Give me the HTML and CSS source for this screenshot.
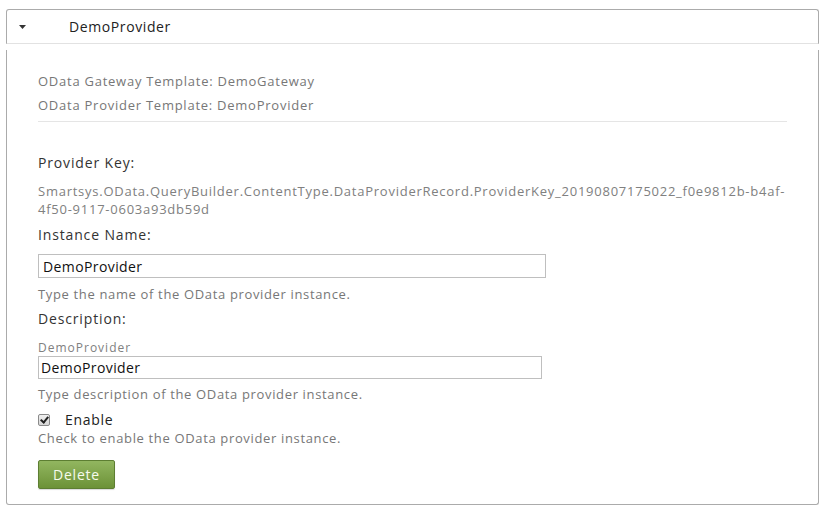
FILE: index.html
```html
<!DOCTYPE html>
<html>
<head>
<meta charset="utf-8">
<link rel="stylesheet" href="styles.css">
</head>
<body>
<div class="wrap">
  <div class="head">
    <svg class="caret" width="7" height="4" viewBox="0 0 7 4"><polygon points="0,0 7,0 3.5,4" fill="#333"/></svg>
    <span class="head-title">DemoProvider</span>
  </div>
  <div class="panel">
    <div class="meta">
      <div class="meta-line">OData Gateway Template: DemoGateway</div>
      <div class="meta-line">OData Provider Template: DemoProvider</div>
    </div>
    <div class="field key-field">
      <div class="label">Provider Key:</div>
      <div class="key">Smartsys.OData.QueryBuilder.ContentType.DataProviderRecord.ProviderKey_20190807175022_f0e9812b-b4af-4f50-9117-0603a93db59d</div>
    </div>
    <div class="field name-field">
      <div class="label">Instance Name:</div>
      <input class="text name-input" type="text" value="DemoProvider">
      <div class="hint">Type the name of the OData provider instance.</div>
    </div>
    <div class="field desc-field">
      <div class="label">Description:</div>
      <div class="small">DemoProvider</div>
      <input class="text desc-input" type="text" value="DemoProvider">
      <div class="hint desc-hint">Type description of the OData provider instance.</div>
    </div>
    <div class="check-row">
      <input type="checkbox" class="check" checked>
      <span class="check-label">Enable</span>
    </div>
    <div class="hint check-hint">Check to enable the OData provider instance.</div>
    <button class="btn">Delete</button>
  </div>
</div>
</body>
</html>
```
FILE: styles.css
```css
html, body {
  margin: 0;
  padding: 0;
  background: #fff;
}
body {
  font-family: "Open Sans", "DejaVu Sans", sans-serif;
  color: #333;
}
.wrap {
  padding: 9px 20px 0 6px;
}
.head {
  height: 35px;
  border: 1px solid #ababab;
  border-bottom: 1px solid #e2e2e2;
  border-radius: 3px 3px 0 0;
  display: flex;
  align-items: center;
  box-sizing: border-box;
}
.caret {
  display: block;
  margin-left: 12px;
  margin-top: 1px;
}
.head-title {
  margin-left: 43px;
  font-size: 14px;
  letter-spacing: 0.6px;
  color: #222;
}
.panel {
  margin-top: 6px;
  border: 1px solid #ababab;
  border-top: none;
  border-radius: 0 0 3px 3px;
  padding: 19px 31px 15px 31px;
  box-sizing: border-box;
}
.meta {
  border-bottom: 1px solid #e5e5e5;
  padding-bottom: 4px;
}
.meta-line {
  font-size: 13px;
  letter-spacing: 0.75px;
  color: #777;
  line-height: 24px;
}
.field {
  display: flex;
  flex-direction: column;
}
.key-field {
  margin-top: 31px;
}
.label {
  font-size: 14px;
  letter-spacing: 0.85px;
  color: #333;
  line-height: 20px;
}
.key {
  margin-top: 9px;
  font-size: 13px;
  letter-spacing: 0.75px;
  color: #808080;
  line-height: 18px;
}
.text {
  font-family: "Open Sans", "DejaVu Sans", sans-serif;
  font-size: 14px;
  letter-spacing: 0.4px;
  color: #111;
  border: 1px solid #bfbfbf;
  padding: 0 4px;
  margin: 0;
  box-sizing: border-box;
  outline: none;
}
.name-field {
  margin-top: 7px;
}
.name-input {
  width: 508px;
  height: 24px;
  margin-top: 9px;
}
.desc-field {
  margin-top: 6px;
}
.desc-input {
  width: 504px;
  height: 23px;
  padding: 0 2px;
}
.hint {
  font-size: 13px;
  letter-spacing: 0.65px;
  color: #777;
  line-height: 18px;
  margin-top: 7px;
}
.desc-hint {
  margin-top: 6px;
}
.small {
  font-size: 12px;
  letter-spacing: 1px;
  color: #808080;
  line-height: 16px;
  margin-top: 11px;
}
.check-row {
  display: flex;
  align-items: center;
  margin-top: 8px;
}
.check {
  appearance: none;
  -webkit-appearance: none;
  margin: 0;
  width: 12px;
  height: 12px;
  border: 1px solid #8a8a8a;
  border-radius: 2px;
  background: linear-gradient(#f0f0f0, #d6d6d6);
  box-sizing: border-box;
  position: relative;
}
.check:checked::after {
  content: "";
  position: absolute;
  left: 3px;
  top: 0px;
  width: 3px;
  height: 6px;
  border: solid #222;
  border-width: 0 2px 2px 0;
  transform: rotate(40deg);
}
.check-label {
  margin-left: 15px;
  font-size: 14px;
  letter-spacing: 0.7px;
  color: #222;
  line-height: 18px;
}
.check-hint {
  margin-top: 0;
}
.btn {
  display: block;
  margin-top: 13px;
  width: 77px;
  height: 29px;
  border: 1px solid #5d7e32;
  border-radius: 2px;
  background: linear-gradient(#92b660, #6c9237);
  color: #f6fbee;
  font-family: "Open Sans", "DejaVu Sans", sans-serif;
  font-size: 14px;
  letter-spacing: 0.8px;
  padding: 0;
  box-shadow: 0 1px 1px rgba(0,0,0,0.15);
}
```
